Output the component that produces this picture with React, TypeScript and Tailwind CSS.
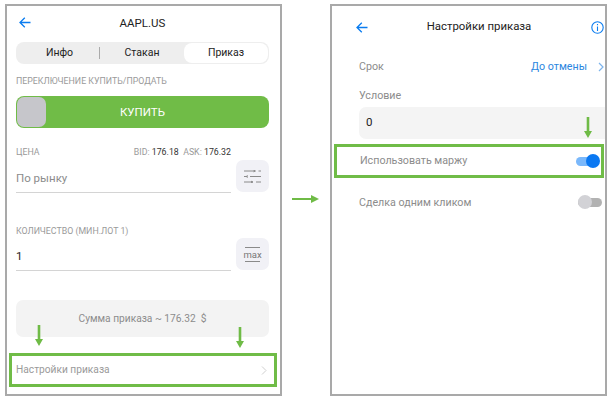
import React from "react";

const font = { fontFamily: "Roboto, sans-serif" };

function Back() {
  return (
    <svg width="12" height="11" viewBox="0 0 12 11" fill="none" stroke="#0a7cf0" strokeWidth="1.3">
      <path d="M11.5 5.5H1M5.8.8 1 5.5l4.8 4.7" />
    </svg>
  );
}

function Down({ className }: { className: string }) {
  return (
    <svg className={className} width="8" height="21" viewBox="0 0 8 21" fill="#6fbb46">
      <path d="M2.7 0h2.6v14H8L4 21 0 14h2.7z" />
    </svg>
  );
}

function FieldButton({ children }: { children: React.ReactNode }) {
  return (
    <div className="flex h-[32px] w-[33px] shrink-0 items-center justify-center rounded-[7px] bg-[#f1f1f6]">
      {children}
    </div>
  );
}

export default function App() {
  return (
    <div className="flex h-[402px] w-[614px] overflow-hidden bg-white pt-[4px] pl-[5px] text-[#333]" style={font}>
      {/* left phone */}
      <div className="relative h-[392px] w-[277px] shrink-0 border-2 border-[#a9a9a9] bg-white pl-[9px] pr-[11px]">
        <div className="relative flex h-[36px] items-center justify-center">
          <div className="absolute left-[3px] top-[11px]"><Back /></div>
          <span className="text-[11.5px] text-[#222]">AAPL.US</span>
        </div>
        <div className="flex h-[22px] items-center rounded-[8px] bg-[#eeeeee] pr-px text-[10.5px] text-[#222]">
          <div className="relative flex h-full w-[84px] items-center justify-center pl-[3px]">Инфо<span className="absolute right-0 top-[5px] h-[12px] w-px bg-[#aaa]" /></div>
          <div className="flex h-full w-[84px] items-center justify-center">Стакан</div>
          <div className="flex h-[20px] flex-1 items-center justify-center rounded-[8px] bg-white">Приказ</div>
        </div>
        <div className="mt-[11px] text-[8.8px] leading-[12px] text-[#9a9a9a]">ПЕРЕКЛЮЧЕНИЕ КУПИТЬ/ПРОДАТЬ</div>
        <div className="mt-[9px] flex h-[32px] items-center rounded-[8px] bg-[#70bc47] pl-px">
          <div className="h-[30px] w-[29px] rounded-[7px] bg-[#c6c6cb]" />
          <div className="flex-1 pr-[30px] pt-px text-center text-[11.5px] text-white">КУПИТЬ</div>
        </div>
        <div className="mt-[19px] flex gap-[5px]">
          <div className="w-[215px]">
            <div className="flex h-[12px] items-center justify-between text-[8.8px] text-[#9a9a9a]">
              <span>ЦЕНА</span>
              <span>BID: <span className="text-[#333]">176.18</span>&nbsp; ASK: <span className="text-[#333]">176.32</span></span>
            </div>
            <div className="mt-[11px] h-[23px] border-b border-[#d4d4d4] text-[11.5px] leading-[16px] text-[#8c8c8c]">По рынку</div>
          </div>
          <div className="mt-[13px]">
            <FieldButton>
              <svg width="17" height="13" viewBox="0 -0.5 17 13" fill="none" stroke="#8a8a8a" strokeWidth="1">
                <path d="M0 .5h11M14.5 .5H17M0 6h2.5M6 6h11M0 11.5h8.5M12 11.5h5" />
                <path d="M9.5-.3l2 .8-2 .8M4 5.2 2 6l2 .8M7 10.7l2 .8-2 .8" />
              </svg>
            </FieldButton>
          </div>
        </div>
        <div className="mt-[32px] flex gap-[5px]">
          <div className="w-[215px]">
            <div className="h-[12px] text-[8.8px] leading-[12px] text-[#9a9a9a]">КОЛИЧЕСТВО (МИН.ЛОТ 1)</div>
            <div className="mt-[11px] h-[23px] border-b border-[#d4d4d4] text-[11.5px] leading-[16px] text-[#222]">1</div>
          </div>
          <div className="mt-[13px]">
            <FieldButton>
              <div className="flex w-[20px] flex-col items-center">
                <span className="h-px w-[15px] bg-[#8a8a8a]" />
                <span className="text-[9.5px] leading-[13px] text-[#777]">max</span>
                <span className="h-px w-[15px] bg-[#8a8a8a]" />
              </div>
            </FieldButton>
          </div>
        </div>
        <div className="mt-[29px] flex h-[37px] items-center justify-center rounded-[7px] bg-[#f3f3f3] text-[10.2px] text-[#8c8c8c]">Сумма приказа ~ 176.32&nbsp; $</div>
        <div className="mt-[16px] -ml-[7px] -mr-[8px] flex h-[34px] items-center justify-between border-[3px] border-[#70bc47] pl-[4px] pr-[7px] text-[10.2px] text-[#9a9a9a]">
          <span>Настройки приказа</span>
          <svg width="6" height="9" viewBox="0 0 6 9" fill="none" stroke="#cfcfcf" strokeWidth="1"><path d="M1 .5 5 4.5 1 8.5" /></svg>
        </div>
        <Down className="absolute left-[28px] top-[319px]" />
        <Down className="absolute left-[229px] top-[321px]" />
      </div>

      {/* middle arrow */}
      <div className="flex h-[392px] w-[48px] shrink-0 items-start pl-[10px] pt-[191px]">
        <svg width="27" height="8" viewBox="0 0 27 8" fill="#6fbb46"><path d="M0 3h19V0l8 4-8 4V5H0z" /></svg>
      </div>

      {/* right phone */}
      <div className="relative h-[392px] w-[277px] shrink-0 border-2 border-[#a9a9a9] bg-white pl-[27px] pr-0">
        <div className="relative flex h-[42px] items-center justify-center pr-[6px]">
          <div className="absolute left-[-3px] top-[16px]"><Back /></div>
          <span className="text-[11.4px] text-[#222]">Настройки приказа</span>
          <svg className="absolute right-[1px] top-[15px]" width="13" height="13" viewBox="0 0 13 13" fill="none" stroke="#0a7cf0" strokeWidth="1.1">
            <circle cx="6.5" cy="6.5" r="5.7" />
            <path d="M6.5 5.5v4.5M6.5 3v1.2" />
          </svg>
        </div>
        <div className="mt-[11px] flex h-[16px] items-center justify-between pr-[1px] text-[10.7px] text-[#8c8c8c]">
          <span>Срок</span>
          <span className="flex items-center gap-[11px] text-[#2a86e0]">
            До отмены
            <svg width="6" height="10" viewBox="0 0 6 10" fill="none" stroke="#7db4ec" strokeWidth="1.2"><path d="M1 1 5 5 1 9" /></svg>
          </span>
        </div>
        <div className="mt-[13px] h-[16px] text-[10.7px] leading-[16px] text-[#8c8c8c]">Условие</div>
        <div className="relative mt-[3px] flex h-[32px] items-center rounded-l-[7px] bg-[#f4f4f4] pl-[7px] text-[11.5px] text-[#222]">
          0
          <Down className="absolute right-[13px] top-[10px]" />
        </div>
        <div className="mt-[5px] -ml-[25px] mr-[1px] flex h-[34px] items-center justify-between border-[3px] border-[#70bc47] pl-[23px] pr-[1px] text-[10.7px] text-[#8c8c8c]">
          <span>Использовать маржу</span>
          <div className="flex w-[24px] items-center">
            <div className="relative h-[9px] w-[22px] rounded-full bg-[#7ab8fb]">
              <span className="absolute right-[-2px] top-[-3px] h-[14px] w-[14px] rounded-full bg-[#0a78f2]" />
            </div>
          </div>
        </div>
        <div className="mt-[17px] flex h-[16px] items-center justify-between pr-[3px] text-[10.7px] text-[#8c8c8c]">
          <span>Сделка одним кликом</span>
          <div className="relative h-[9px] w-[24px] -translate-y-px rounded-full bg-[#b2b2b2]">
            <span className="absolute left-0 top-[-2.5px] h-[14px] w-[14px] rounded-full bg-[#d2d2d6]" />
          </div>
        </div>
      </div>
    </div>
  );
}
